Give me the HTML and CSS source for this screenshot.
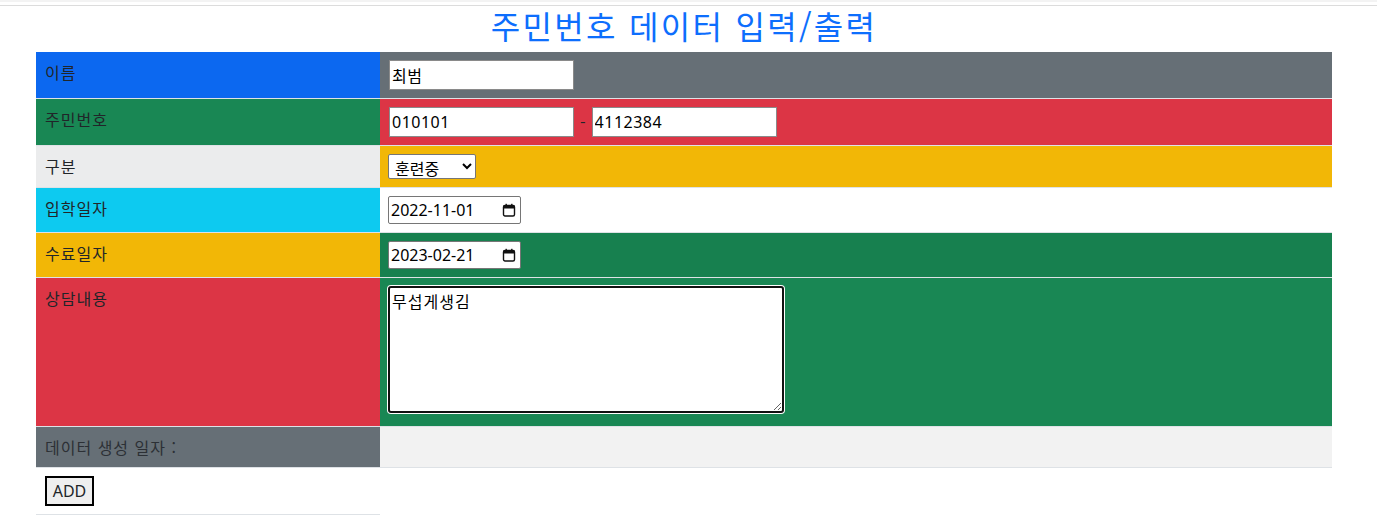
FILE: index.html
```html
<!DOCTYPE html>
<html lang="ko">
<head>
<meta charset="utf-8">
<title>주민번호 데이터 입력/출력</title>
<link rel="stylesheet" href="styles.css">
</head>
<body>
<div class="topbar"></div>
<div class="wrap">
  <h2 class="title">주민번호 데이터 입력/출력</h2>
  <table class="tbl">
    <tr class="odd">
      <td class="lab c-primary">이름</td>
      <td class="val c-secondary"><input class="txt" type="text" value="최범"></td>
    </tr>
    <tr>
      <td class="lab c-success">주민번호</td>
      <td class="val c-danger"><input class="txt" type="text" value="010101"><span class="dash">-</span><input class="txt" type="text" value="4112384"></td>
    </tr>
    <tr class="odd">
      <td class="lab c-light">구분</td>
      <td class="val c-warning"><select class="sel"><option>훈련중</option><option>수료</option></select></td>
    </tr>
    <tr>
      <td class="lab c-info">입학일자</td>
      <td class="val c-white"><span class="datebox"><input class="date" type="text" value="2022-11-01"><svg class="cal" width="14" height="14" viewBox="0 0 14 14"><rect x="1.5" y="2.5" width="11" height="10.5" rx="1.5" fill="none" stroke="#111" stroke-width="1.4"/><rect x="1.5" y="2.5" width="11" height="3" fill="#111"/><rect x="3.5" y="0.8" width="1.4" height="2.5" fill="#111"/><rect x="9.1" y="0.8" width="1.4" height="2.5" fill="#111"/></svg></span></td>
    </tr>
    <tr class="odd">
      <td class="lab c-warning">수료일자</td>
      <td class="val c-success"><span class="datebox"><input class="date" type="text" value="2023-02-21"><svg class="cal" width="14" height="14" viewBox="0 0 14 14"><rect x="1.5" y="2.5" width="11" height="10.5" rx="1.5" fill="none" stroke="#111" stroke-width="1.4"/><rect x="1.5" y="2.5" width="11" height="3" fill="#111"/><rect x="3.5" y="0.8" width="1.4" height="2.5" fill="#111"/><rect x="9.1" y="0.8" width="1.4" height="2.5" fill="#111"/></svg></span></td>
    </tr>
    <tr>
      <td class="lab c-danger">상담내용</td>
      <td class="val c-success"><textarea class="area">무섭게생김</textarea></td>
    </tr>
    <tr class="odd">
      <td class="lab c-secondary muted">데이터 생성 일자 :</td>
      <td class="val c-white"></td>
    </tr>
    <tr>
      <td class="lab c-white"><button class="btn" type="button">ADD</button></td>
    </tr>
  </table>
</div>
</body>
</html>
```
FILE: styles.css
```css
html, body {
  margin: 0;
  padding: 0;
  background: #fff;
}
body {
  font-family: "Noto Sans", "Noto Sans CJK KR", sans-serif;
  font-size: 16px;
  line-height: 1.5;
  color: #212529;
}
.topbar {
  height: 3px;
  border-top: 2px solid #f3f3f3;
  border-bottom: 1px solid #dcdcdc;
}
.wrap {
  margin-left: 36px;
  width: 1296px;
}
.title {
  margin: 0 0 8px;
  height: 38px;
  line-height: 38px;
  font-size: 32px;
  letter-spacing: 2.3px;
  font-weight: 400;
  color: #0d6efd;
  text-align: center;
  font-family: "Noto Sans CJK KR", sans-serif;
}
.tbl {
  width: 1296px;
  border-collapse: collapse;
  border-spacing: 0;
}
.tbl td {
  padding: 8px;
  vertical-align: top;
  border-bottom: 1px solid #dee2e6;
  font-family: "Noto Sans CJK KR", sans-serif;
}
.tbl td.lab {
  width: 327px;
  padding-left: 9px;
  letter-spacing: 1px;
}
.c-primary { background: #0d6efd; }
.c-secondary { background: #6c757d; }
.c-success { background: #198754; }
.c-danger { background: #dc3545; }
.c-warning { background: #ffc107; }
.c-info { background: #0dcaf0; }
.c-light { background: #f8f9fa; }
.c-white { background: #fff; }
.odd td { box-shadow: inset 0 0 0 9999px rgba(0, 0, 0, 0.05); }
.muted { color: #2c3035; }

.txt {
  box-sizing: border-box;
  width: 185px;
  height: 30px;
  margin: 0 0 0 1px;
  padding: 1px 2px;
  border: 1px solid #8a8a8a;
  background: #fff;
  font-family: "Noto Sans", "Noto Sans CJK KR", sans-serif;
  font-size: 16px;
  letter-spacing: 0.5px;
  color: #000;
  vertical-align: top;
}
.dash {
  display: inline-block;
  margin: 0 6px 0 6px;
  line-height: 30px;
  vertical-align: top;
  color: #212529;
}
.dash + .txt { margin-left: 0; }
.sel {
  box-sizing: border-box;
  width: 88px;
  height: 25px;
  margin: 0;
  padding: 0 0 0 2px;
  border: 1px solid #767676;
  border-radius: 2px;
  background: #fff;
  font-family: "Noto Sans CJK KR", sans-serif;
  font-size: 16px;
  color: #000;
  vertical-align: top;
}
.datebox {
  position: relative;
  display: inline-block;
  vertical-align: top;
}
.date {
  box-sizing: border-box;
  display: block;
  width: 133px;
  height: 28px;
  margin: 0;
  padding: 1px 2px;
  border: 1px solid #767676;
  border-radius: 2px;
  background: #fff;
  font-family: "Noto Sans", sans-serif;
  font-size: 16px;
  color: #000;
}
.cal {
  position: absolute;
  right: 5px;
  top: 7px;
}
.area {
  box-sizing: border-box;
  display: block;
  width: 396px;
  height: 127px;
  margin: 0 0 5px;
  padding: 1px 2px;
  border: 2px solid #111;
  border-radius: 3px;
  box-shadow: 0 0 0 1px #fff;
  outline: none;
  background: #fff;
  font-family: "Noto Sans CJK KR", sans-serif;
  font-size: 16px;
  line-height: 1.5;
  letter-spacing: 1px;
  color: #000;
}
.btn {
  box-sizing: border-box;
  height: 30px;
  width: 49px;
  margin: 0;
  padding: 0;
  border: 2px solid #000;
  border-radius: 0;
  background: #efefef;
  font-family: "Noto Sans", sans-serif;
  font-size: 16px;
  color: #212529;
  vertical-align: top;
}
```
